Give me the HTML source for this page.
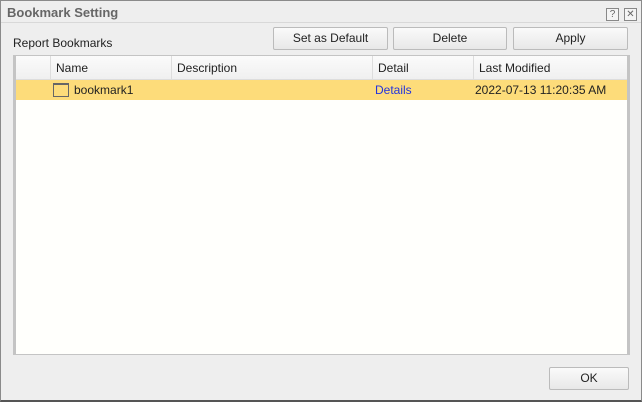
<!DOCTYPE html>
<html><head><style>
*{margin:0;padding:0;box-sizing:border-box}
body{width:642px;height:402px;overflow:hidden;font-family:"Liberation Sans",Tahoma,sans-serif;font-size:12px;color:#222}
.win{position:absolute;left:0;top:0;width:642px;height:402px;background:#eeeeee;border:1px solid #8a8a8a;border-bottom:2px solid #555}
.title{position:absolute;left:0;top:0;width:640px;height:22px;border-bottom:1px solid #d8d8d8;font-weight:bold;font-size:13px;color:#666;padding:4px 0 0 6px}
.ib{position:absolute;top:7px;width:13px;height:13px;border:1px solid #888;font-size:10px;line-height:11px;text-align:center;color:#666;background:#f4f4f4}
.btn{position:absolute;height:23px;border:1px solid #bbb;border-radius:2px;background:linear-gradient(#fafafa,#e8e8e8);text-align:center;line-height:21px;font-size:12px;color:#222}
.lbl{position:absolute;left:12px;top:35px;font-size:12px}
.grid{position:absolute;left:12px;top:54px;width:617px;height:300px;border:1px solid #bdbdbd;background:#fffffc;border-left-width:3px;border-right-width:3px;border-color:#c4c4c4}
.hdr{position:absolute;left:0;top:0;width:100%;height:24px;background:linear-gradient(#fbfbfb,#f0f0f0);border-bottom:1px solid #ddd}
.hc{position:absolute;top:0;height:24px;border-right:1px solid #ddd;padding:5px 0 0 5px;font-size:12px}
.row{position:absolute;left:0;top:24px;width:100%;height:20px;background:#fddc7a}
.rc{position:absolute;top:3px;font-size:12px}
</style></head><body>
<div class="win">
<div class="title">Bookmark Setting</div>
<div class="ib" style="left:605px">?</div>
<div class="ib" style="left:623px">✕</div>
<div class="lbl">Report Bookmarks</div>
<div class="btn" style="left:272px;top:26px;width:115px">Set as Default</div>
<div class="btn" style="left:392px;top:26px;width:114px">Delete</div>
<div class="btn" style="left:512px;top:26px;width:115px">Apply</div>
<div class="grid">
 <div class="hdr">
  <div class="hc" style="left:0;width:35px"></div>
  <div class="hc" style="left:35px;width:121px">Name</div>
  <div class="hc" style="left:156px;width:201px">Description</div>
  <div class="hc" style="left:357px;width:101px">Detail</div>
  <div class="hc" style="left:458px;width:153px;border-right:none">Last Modified</div>
 </div>
 <div class="row">
  <div style="position:absolute;left:37px;top:3px;width:16px;height:14px;border:1px solid #666;border-top-width:2px"></div>
  <div class="rc" style="left:58px">bookmark1</div>
  <div class="rc" style="left:359px;color:#2233dd">Details</div>
  <div class="rc" style="left:459px">2022-07-13 11:20:35 AM</div>
 </div>
</div>
<div class="btn" style="left:548px;top:366px;width:80px">OK</div>
</div>
</body></html>
